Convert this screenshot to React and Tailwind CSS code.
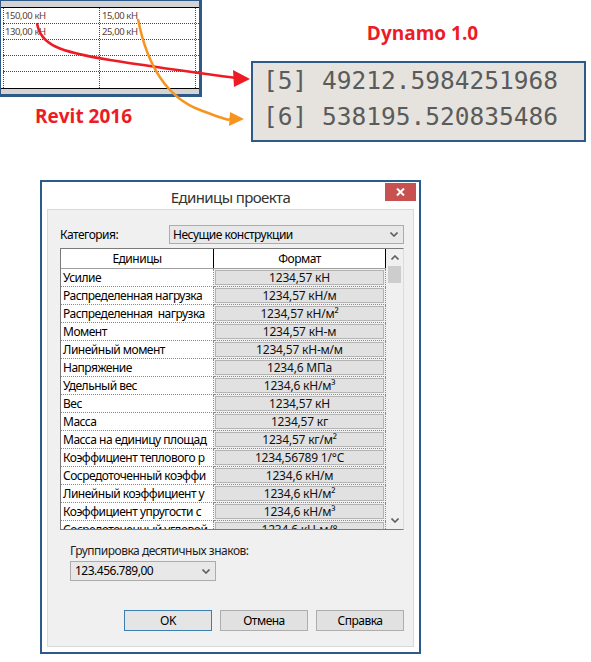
import React from 'react';

// видимая часть названий (колонка в диалоге обрезает их по ширине)
const units = [
  ['Усилие', '1234,57 кН'],
  ['Распределенная нагрузка', '1234,57 кН/м'],
  ['Распределенная  нагрузка', '1234,57 кН/м²'],
  ['Момент', '1234,57 кН-м'],
  ['Линейный момент', '1234,57 кН-м/м'],
  ['Напряжение', '1234,6 МПа'],
  ['Удельный вес', '1234,6 кН/м³'],
  ['Вес', '1234,57 кН'],
  ['Масса', '1234,57 кг'],
  ['Масса на единицу площад', '1234,57 кг/м²'],
  ['Коэффициент теплового р', '1234,56789 1/°C'],
  ['Сосредоточенный коэффи', '1234,6 кН/м'],
  ['Линейный коэффициент у', '1234,6 кН/м²'],
  ['Коэффициент упругости с', '1234,6 кН/м³'],
  ['Сосредоточенный угловой', '1234,6 кН-м/°'],
];

const revitRows = [
  ['150,00 кН', '15,00 кН'],
  ['130,00 кН', '25,00 кН'],
  ['', ''],
  ['', ''],
  ['', ''],
];

function Chevron({ up = false }) {
  return (
    <svg width="8" height="5" viewBox="0 0 8 5">
      <polyline
        points={up ? '0.5,4.5 4,1 7.5,4.5' : '0.5,0.5 4,4 7.5,0.5'}
        fill="none"
        stroke="#606060"
        strokeWidth="1.6"
      />
    </svg>
  );
}

function RevitTable() {
  return (
    <div className="w-[202px] h-[97px] border-t border-l border-r-[3px] border-b-[3px] border-[#2e5a8a] bg-[#d4d4d4] flex flex-col">
      <div className="h-[6px]" />
      <div className="h-[82px] border-y border-black bg-white pl-[2px]">
        {revitRows.map((r, i) => (
          <div key={i} className={`flex h-[16px] ${i < 4 ? 'border-b border-dotted border-[#444]' : ''}`}>
            <div className="w-[97px] border-l border-r border-dotted border-[#444] pl-[1px] text-[9.5px] leading-[15px] text-[#5a4030] tracking-[-0.4px]">
              {r[0]}
            </div>
            <div className="w-[96px] border-r border-dotted border-[#444] pl-[2px] text-[9.5px] leading-[15px] text-[#5a4030] tracking-[-0.4px]">
              {r[1]}
            </div>
          </div>
        ))}
      </div>
      <div className="flex-1" />
    </div>
  );
}

function Arrows() {
  return (
    <svg className="absolute left-0 top-0 pointer-events-none" width="591" height="150" viewBox="0 0 591 150">
      <path d="M37 23 C40 45, 60 52, 110 60 C160 68, 200 73, 236 78" fill="none" stroke="#ed1c24" strokeWidth="2.5" />
      <polygon points="233,70 250,79 234,87" fill="#ed1c24" />
      <path d="M138 19 C145 55, 160 95, 200 110 S225 118, 232 119" fill="none" stroke="#f7941d" strokeWidth="2.5" />
      <polygon points="230,112 244,119 229,126" fill="#f7941d" />
    </svg>
  );
}

export default function App() {
  return (
    <div className="relative w-[591px] h-[662px] bg-white overflow-hidden" style={{ fontFamily: '"Noto Sans", "Open Sans", sans-serif' }}>
      {/* верх: Revit и Dynamo */}
      <div className="flex h-[180px]">
        <div className="w-[251px] shrink-0">
          <RevitTable />
          <div className="ml-[35px] mt-[7px] text-[19px] leading-[24px] font-bold text-[#ed1c24]" style={{ fontFamily: '"Open Sans", sans-serif' }}>
            Revit 2016
          </div>
        </div>
        <div className="w-[335px] shrink-0">
          <div className="h-[61px] pt-[21px] pl-[8px] text-center text-[19px] leading-[24px] font-bold text-[#ed1c24]" style={{ fontFamily: '"Open Sans", sans-serif' }}>
            Dynamo 1.0
          </div>
          <div className="h-[81px] border-2 border-[#2e5a8a] bg-[#e6e3de] pl-[10px] text-[24.5px] leading-[36px] text-[#5b5b5b]" style={{ fontFamily: '"DejaVu Sans Mono", monospace' }}>
            <div>[5] 49212.5984251968</div>
            <div>[6] 538195.520835486</div>
          </div>
        </div>
      </div>

      {/* диалог Единицы проекта */}
      <div className="ml-[40px] w-[381px] h-[474px] border-2 border-[#2b5a8c] bg-white flex flex-col tracking-[-0.5px]">
        <div className="h-[27px] shrink-0 grid grid-cols-[1fr_auto_1fr] items-start">
          <div />
          <div className="pt-[5px] text-[15px] leading-[20px] text-[#333] tracking-[-0.6px]">Единицы проекта</div>
          <div className="justify-self-end pt-[1px] pr-[3px]">
            <div className="w-[31px] h-[18px] bg-[#c75050] flex items-center justify-center">
              <svg width="9" height="8" viewBox="0 0 9 8">
                <path d="M1 0.5 L8 7.5 M8 0.5 L1 7.5" stroke="#fff" strokeWidth="2" />
              </svg>
            </div>
          </div>
        </div>

        <div className="flex-1 mx-[5px] mb-[5px] border border-[#d9d9d9] bg-[#f0f0f0] flex flex-col pl-[12px] pr-[9px] pt-[15px] text-[12px] text-black">
          <div className="flex items-center h-[19px]">
            <div className="w-[109px]">Категория:</div>
            <div className="flex-1 h-[19px] border border-[#acacac] bg-[#e8e8e8] flex items-center justify-between pl-[3px] pr-[5px]">
              <span className="leading-[16px]">Несущие конструкции</span>
              <Chevron />
            </div>
          </div>

          {/* таблица */}
          <div className="mt-[4px] h-[282px] border border-[#7a7a7a] border-r-[#dcdcdc] flex overflow-hidden">
            <div className="w-[325px] shrink-0 overflow-hidden">
              <div className="flex h-[20px] bg-white border-b border-[#a0a0a0]">
                <div className="w-[153px] border-r border-black text-center leading-[19px]">Единицы</div>
                <div className="w-[172px] border-r border-black text-center leading-[19px]">Формат</div>
              </div>
              {units.map(([name, fmt]) => (
                <div key={name} className="flex h-[18px] shrink-0">
                  <div className="w-[153px] bg-white border-b border-r border-dotted border-[#8a8a8a] pl-[2px] leading-[17px] whitespace-pre overflow-hidden">
                    {name}
                  </div>
                  <div className="w-[172px] border-b border-r border-dotted border-[#8a8a8a] p-[1px]">
                    <div className="h-[15px] bg-[#e1e1e1] border border-[#b4b4b4] flex items-center justify-center text-[#111] whitespace-nowrap tracking-[-0.2px]">
                      <span className="leading-[13px]">{fmt}</span>
                    </div>
                  </div>
                </div>
              ))}
            </div>
            <div className="w-[17px] shrink-0 bg-[#f0f0f0] flex flex-col">
              <div className="h-[17px] flex items-center justify-center"><Chevron up /></div>
              <div className="ml-[2px] w-[13px] h-[17px] bg-[#cdcdcd]" />
              <div className="flex-1" />
              <div className="h-[17px] flex items-center justify-center"><Chevron /></div>
            </div>
          </div>

          <div className="ml-[10px] mt-[13px] leading-[16px] text-[#1e1e1e]">Группировка десятичных знаков:</div>
          <div className="ml-[10px] mt-[2px] w-[146px] h-[20px] border border-[#acacac] bg-[#e8e8e8] flex items-center justify-between pl-[4px] pr-[5px]">
            <span className="leading-[16px]">123.456.789,00</span>
            <Chevron />
          </div>

          <div className="mt-[29px] flex justify-end gap-[8px]">
            <div className="w-[88px] h-[21px] border border-[#3c7fb1] bg-[#e5e5e5] flex items-center justify-center">OK</div>
            <div className="w-[88px] h-[21px] border border-[#adadad] bg-[#e1e1e1] flex items-center justify-center">Отмена</div>
            <div className="w-[88px] h-[21px] border border-[#adadad] bg-[#e1e1e1] flex items-center justify-center">Справка</div>
          </div>
        </div>
      </div>

      <Arrows />
    </div>
  );
}
